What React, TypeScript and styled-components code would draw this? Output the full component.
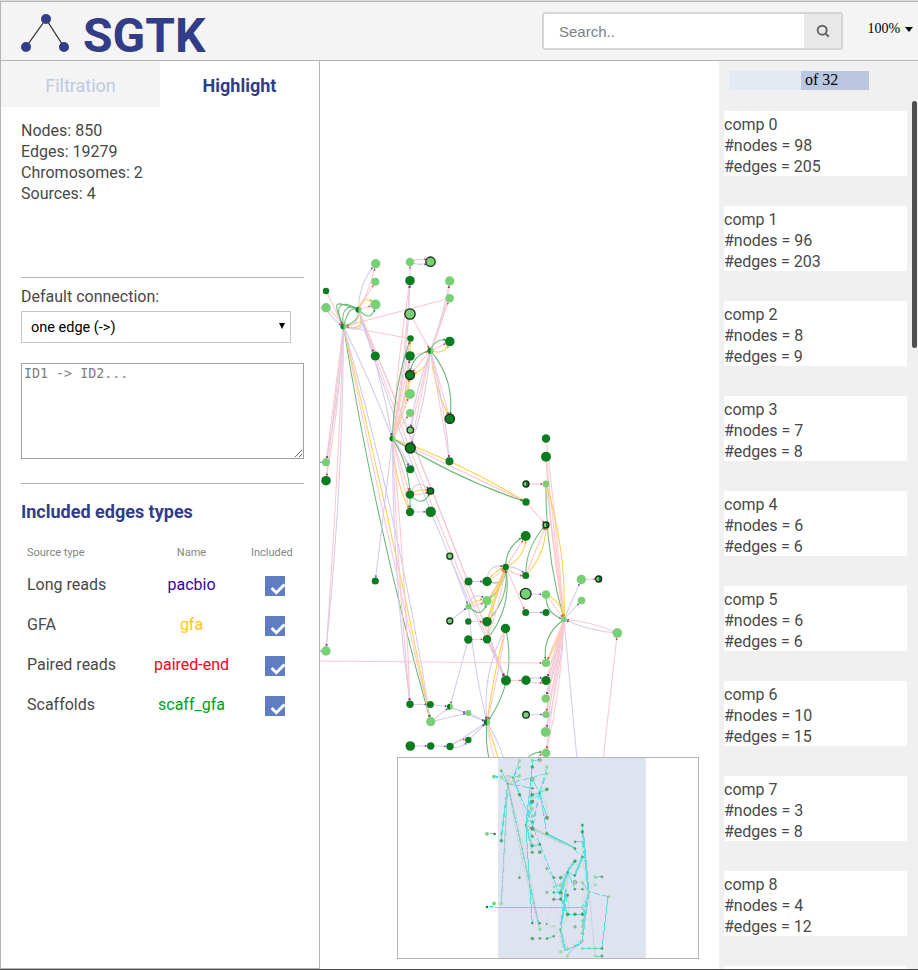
import React from "react";
import styled, { createGlobalStyle } from "styled-components";

const GlobalStyle = createGlobalStyle`
  * { box-sizing: border-box; }
  body { margin: 0; background: #fff; overflow: hidden; }
`;

const Page = styled.div`
  width: 918px;
  height: 970px;
  display: flex;
  flex-direction: column;
  border-top: 1px solid #dcdcdc;
  border-bottom: 1px solid #4a4a4a;
  background: #fff;
  color: #484848;
  font: 16px/21px Roboto, sans-serif;
  overflow: hidden;
`;

const Header = styled.header`
  height: 60px;
  flex: none;
  display: flex;
  border: 1px solid #b5b5b5;
  border-right: 0;
  background: #f4f4f4;
`;

const Logo = styled.div`
  display: flex;
  width: 542px;
  padding-left: 20px;
`;

const LogoMark = styled.svg`
  width: 50px;
  height: 42px;
  margin-top: 11px;
`;

const LogoText = styled.h1`
  margin: 6px 0 0 12px;
  font-size: 48px;
  line-height: 56px;
  font-weight: 700;
  color: #323c87;
`;

const SearchBox = styled.div`
  display: flex;
  width: 301px;
  height: 38px;
  margin-top: 10px;
  margin-left: -1px;
  border: 2px solid #d5d5d5;
  border-radius: 3px;
  background: #fff;
`;

const SearchInput = styled.input`
  flex: 1;
  min-width: 0;
  border: 0;
  padding: 0 15px;
  outline: 0;
  background: transparent;
  font: 15px "Liberation Sans", sans-serif;
  &::placeholder { color: #808080; opacity: 1; }
`;

const SearchButton = styled.button`
  width: 37px;
  border: 0;
  padding: 0;
  background: #e8e8e8;
  display: flex;
  align-items: center;
  justify-content: center;
`;

const Zoom = styled.div`
  display: flex;
  margin: 18px 0 0 24.5px;
  gap: 4.5px;
  color: #000;
  font: 14px/18px "Liberation Serif", serif;
`;

const Caret = styled.i`
  margin-top: 7px;
  height: 0;
  border: 4.5px solid transparent;
  border-top: 5px solid #000;
  border-bottom: 0;
`;

const Main = styled.main`
  flex: 1;
  min-height: 0;
  display: flex;
`;

const Sidebar = styled.aside`
  width: 320px;
  height: 908px;
  flex: none;
  border: 1px solid #b5b5b5;
  border-top: 0;
`;

const Tabs = styled.nav`
  display: flex;
  height: 46px;
`;

const Tab = styled.div<{ $active?: boolean }>`
  width: 159px;
  text-align: center;
  font-size: 18px;
  line-height: 50px;
  font-weight: ${(p) => (p.$active ? 700 : 400)};
  color: ${(p) => (p.$active ? "#323c87" : "#bccae3")};
  background: ${(p) => (p.$active ? "#fff" : "#f4f4f4")};
`;

const Stats = styled.div`
  height: 171px;
  margin: 0 15px 0 20px;
  padding-top: 13px;
  border-bottom: 1px solid #b5b5b5;
`;

const Connection = styled.section`
  height: 206px;
  margin: 0 15px 0 20px;
  padding-top: 8px;
  border-bottom: 1px solid #b5b5b5;
`;

const Select = styled.div`
  display: flex;
  justify-content: space-between;
  width: 270px;
  height: 32px;
  margin: 4px 0 20px;
  padding: 0 5px 0 9px;
  border: 1px solid #c4c4c4;
  color: #000;
  font-size: 14.5px;
  line-height: 31px;
`;

const SelectArrow = styled.i`
  width: 0;
  height: 6px;
  margin-top: 11px;
  border: 3.5px solid transparent;
  border-top: 6px solid #000;
  border-bottom: 0;
`;

const Commands = styled.textarea`
  display: block;
  width: 283px;
  height: 96px;
  margin: 0;
  padding: 2px;
  border: 1px solid #a3a3a3;
  outline: 0;
  font: 13.333px/16px "DejaVu Sans Mono", monospace;
  &::placeholder { color: #808080; opacity: 1; }
`;

const SectionTitle = styled.h2`
  margin: 17px 0 18px 20px;
  color: #323c87;
  font-size: 18px;
  line-height: 21px;
`;

const TypeRow = styled.div<{ $head?: boolean }>`
  display: grid;
  grid-template-columns: 105px 119px 40px;
  align-items: center;
  height: ${(p) => (p.$head ? "24px" : "40px")};
  margin-left: 26px;
  font-size: ${(p) => (p.$head ? "11px" : "16px")};
  color: ${(p) => (p.$head ? "#858585" : "#484848")};
`;

const Name = styled.span<{ $color?: string }>`
  text-align: center;
  color: ${(p) => p.$color || "inherit"};
`;

const HeadCell = styled.span`
  white-space: nowrap;
  text-align: center;
`;

const Check = styled.span`
  justify-self: center;
  width: 20px;
  height: 20px;
  margin: 4px 0 0 8px;
  background: #607cc3;
`;

const Canvas = styled.div`
  position: relative;
  width: 399px;
  flex: none;
`;

const Graph = styled.svg`
  display: block;
  width: 399px;
  height: 907px;
`;

const MiniMap = styled.svg`
  position: absolute;
  left: 77px;
  top: 696px;
  width: 302px;
  height: 202px;
  border: 1px solid #b5b5b5;
  background: #fff;
`;

const Components = styled.aside`
  display: flex;
  flex: 1;
  flex-direction: column;
  background: #f0f0f0;
  overflow: hidden;
`;

const Pager = styled.div`
  flex: none;
  display: flex;
  width: 140px;
  height: 19px;
  margin: 10px 0 0 10px;
  background: linear-gradient(to right, #e3eaf3 72px, #bbc7e0 72px);
  color: #000;
  font: 16px/18px "Liberation Serif", serif;
`;

const PagerText = styled.span`
  margin-left: 76px;
`;

const Scroller = styled.div`
  flex: 1;
  display: flex;
  justify-content: space-between;
  min-height: 0;
  margin-top: 11px;
`;

const Cards = styled.div`
  width: 188px;
  padding: 10px 0 0 5px;
  display: flex;
  flex-direction: column;
  gap: 30px;
  overflow: hidden;
`;

const Card = styled.div`
  flex: none;
  width: 183px;
  height: 65px;
  padding-top: 3px;
  background: #fff;
`;

const Thumb = styled.div`
  width: 5px;
  height: 247px;
  margin-right: 1px;
  border-radius: 3px;
  background: #505050;
`;

type Kind = "L" | "D" | "LO" | "DO" | "H" | "HO";
type Node = [number, number, number, Kind];

const nodes: Node[] = [
  [375.7, 263.7, 4.7, "L"], [375.3, 281.7, 4, "L"], [326, 291, 3.2, "D"], [326, 307.7, 4.7, "L"],
  [375.5, 304.5, 5, "L"], [358.5, 309.7, 3, "H"], [343.5, 326.5, 3, "H"], [375.3, 356, 4.6, "D"],
  [410, 262, 4.3, "L"], [430.5, 261.7, 4.7, "LO"], [410, 280.7, 4.8, "D"], [449.7, 281, 4.7, "L"],
  [449.7, 298.3, 4.2, "L"], [410, 314, 5.2, "LO"], [410.5, 338.5, 3.3, "D"], [410, 356, 4.8, "D"],
  [449.8, 341.5, 4.8, "D"], [430.5, 350.7, 3.1, "H"], [410, 375, 4.5, "DO"], [410, 394, 5, "L"],
  [410, 413, 4, "L"], [410.3, 430, 3.2, "LO"], [410.3, 448, 5, "DO"], [449.8, 418.7, 4.7, "DO"],
  [449.5, 461.3, 4, "D"], [326, 462.3, 4, "L"], [326, 480.7, 4.8, "D"], [392.5, 438.5, 2.9, "H"],
  [410.3, 469.3, 4, "D"], [410, 494.5, 4.2, "D"], [430.5, 491, 3.2, "DO"], [410, 512, 4.2, "D"],
  [430.7, 511.8, 5.2, "D"], [546, 438.5, 4.2, "D"], [546, 456.7, 5, "D"], [526, 484, 3, "HO"],
  [546, 484, 3.4, "L"], [526, 502, 3.7, "D"], [546, 525, 3, "HO"], [525.7, 536, 5, "D"],
  [505.7, 567, 3.2, "D"], [449.8, 556.2, 3, "LO"], [468.5, 581.5, 4, "D"], [487, 581.5, 4.7, "D"],
  [525.7, 575.5, 3.5, "D"], [525.7, 593.7, 5.4, "LO"], [546, 594.5, 4.3, "L"], [581.3, 579.5, 4.7, "L"],
  [598.7, 579, 3, "HO"], [581.5, 600.5, 3.8, "L"], [564, 619.5, 2.8, "L"], [487, 600.7, 4.7, "L"],
  [468.5, 606.5, 3, "L"], [449.8, 621, 3, "LO"], [468.3, 621.5, 3.2, "D"], [487, 621.7, 4.8, "D"],
  [468.3, 639.5, 4.2, "D"], [487, 639.3, 4.2, "D"], [525.7, 612.5, 3.5, "D"], [546, 612.5, 3.5, "D"],
  [505.5, 628.5, 4.7, "D"], [617.3, 633, 4.8, "L"], [546, 663, 4.1, "L"], [506, 680.5, 5, "D"],
  [526, 680.3, 4.7, "D"], [546, 680.5, 4.6, "D"], [545.7, 698.5, 4.2, "L"], [526, 714.8, 3.3, "LO"],
  [546, 714.5, 3.6, "L"], [545.7, 732, 5, "L"], [546, 753, 4.4, "L"], [410, 704.3, 3.7, "D"],
  [430.3, 704.5, 3.5, "D"], [450, 706.7, 3, "H"], [468.3, 713, 3, "L"], [430.7, 721.7, 4.6, "L"],
  [487, 722.3, 3.3, "H"], [410.3, 746, 4.8, "D"], [430.7, 746, 3.7, "D"], [450, 746.5, 3.7, "D"],
  [468.3, 740, 3.2, "D"], [326, 651, 4.7, "L"], [375.3, 581, 3.6, "D"],
];

type Ink = "p" | "l" | "g" | "y";
/* ink, x1, y1, x2, y2, bend of the curve's control point */
type Edge = [Ink, number, number, number, number, number?];

const ink: Record<Ink, string> = { p: "#ffc6cc", l: "#d2cbef", g: "#67b976", y: "#fdcf4b" };

const edges: Edge[] = [
  ["l", 326, 307.7, 343.5, 326.5, 4], ["p", 326, 291, 343.5, 326.5], ["p", 326, 307.7, 343.5, 326.5, -3],
  ["p", 449.7, 298.3, 343.5, 326.5], ["p", 410.5, 338.5, 343.5, 326.5],
  ["p", 343.5, 326.5, 326, 462.3], ["p", 343.5, 326.5, 326, 480.7], ["p", 343.5, 326.5, 326, 480.7, -5],
  ["l", 343.5, 326.5, 326, 462.3, -5], ["p", 343.5, 326.5, 326, 651, -3], ["l", 343.5, 326.5, 326, 651, -8],
  ["g", 343.5, 326.5, 430.7, 721.7, 12], ["p", 343.5, 326.5, 430.7, 721.7, 3],
  ["y", 343.5, 326.5, 430.7, 721.7, -4], ["l", 343.5, 326.5, 430.7, 721.7, -13],
  ["l", 343.5, 326.5, 392.5, 438.5, -3],
  ["p", 358.5, 309.7, 375.3, 356], ["l", 358.5, 309.7, 375.3, 356, 3], ["l", 358.5, 309.7, 392.5, 438.5, -6],
  ["l", 358.5, 309.7, 506, 680.5, -3], ["p", 358.5, 309.7, 506, 680.5, 8], ["p", 358.5, 309.7, 506, 680.5, -3], ["l", 358.5, 309.7, 506, 680.5, 15],
  ["l", 358.5, 309.7, 375.7, 263.7, -9], ["p", 358.5, 309.7, 375.7, 263.7, 4], ["p", 358.5, 309.7, 375.3, 281.7],
  ["y", 358.5, 309.7, 375.5, 304.5, -15], ["p", 358.5, 309.7, 375.5, 304.5], ["g", 358.5, 309.7, 375.5, 304.5, 18],
  ["l", 410, 262, 430.5, 261.7, 5], ["p", 410, 262, 430.5, 261.7, -5], ["p", 410, 280.7, 410, 262],
  ["p", 392.5, 438.5, 410, 280.7, -4], ["p", 392.5, 438.5, 410, 280.7, 4], ["l", 392.5, 438.5, 410, 280.7, 7],
  ["g", 392.5, 438.5, 410.5, 338.5, -8], ["p", 392.5, 438.5, 410.5, 338.5], ["y", 392.5, 438.5, 410.5, 338.5, 8],
  ["p", 392.5, 438.5, 410, 356], ["l", 392.5, 438.5, 410, 356, 6], ["p", 392.5, 438.5, 410, 375, 3],
  ["y", 392.5, 438.5, 410, 375, 7], ["p", 392.5, 438.5, 410, 394], ["p", 392.5, 438.5, 410, 413],
  ["p", 410, 314, 430.5, 350.7], ["l", 430.5, 350.7, 449.7, 281, 3], ["p", 430.5, 350.7, 449.7, 281, 6], ["p", 430.5, 350.7, 449.7, 298.3],
  ["g", 430.5, 350.7, 449.8, 341.5, -11], ["p", 430.5, 350.7, 449.8, 341.5], ["y", 430.5, 350.7, 449.8, 341.5, 11],
  ["p", 410, 356, 430.5, 350.7], ["g", 430.5, 350.7, 410, 375, 12], ["p", 430.5, 350.7, 410, 375], ["y", 430.5, 350.7, 410, 375, -11],
  ["g", 430.5, 350.7, 449.8, 418.7, -16], ["p", 430.5, 350.7, 449.8, 418.7], ["y", 430.5, 350.7, 449.8, 418.7, 7],
  ["p", 430.5, 350.7, 410.3, 430], ["p", 430.5, 350.7, 410.3, 448], ["l", 430.5, 350.7, 410.3, 448, -6], ["l", 430.5, 350.7, 410.3, 430, 5],
  ["p", 430.5, 350.7, 449.5, 461.3], ["l", 430.5, 350.7, 449.5, 461.3, -5],
  ["y", 392.5, 438.5, 526, 502, -8], ["p", 392.5, 438.5, 526, 502], ["g", 392.5, 438.5, 526, 502, 9],
  ["p", 392.5, 438.5, 410.3, 469.3], ["l", 392.5, 438.5, 410.3, 469.3, -3], ["g", 392.5, 438.5, 410, 494.5, -8],
  ["p", 392.5, 438.5, 410, 494.5], ["p", 392.5, 438.5, 410, 512], ["y", 392.5, 438.5, 410, 512, 8],
  ["l", 392.5, 438.5, 375.3, 581], ["p", 392.5, 438.5, 410, 704.3, 4], ["p", 392.5, 438.5, 410, 704.3, -4], ["l", 392.5, 438.5, 410, 704.3, 9],
  ["g", 410, 494.5, 410, 512], ["l", 410, 512, 430.7, 511.8], ["y", 410, 494.5, 430.5, 491, -5], ["p", 410, 494.5, 430.5, 491, 3], ["g", 410, 494.5, 430.5, 491, 17], ["l", 410, 494.5, 430.5, 491, -17],
  ["p", 546, 438.5, 564, 619.5, -2], ["p", 546, 456.7, 564, 619.5], ["p", 546, 456.7, 564, 619.5, 5],
  ["g", 546, 484, 564, 619.5, 10], ["p", 546, 484, 564, 619.5], ["y", 546, 484, 564, 619.5, -12],
  ["p", 526, 484, 546, 484], ["p", 526, 502, 546, 525],
  ["g", 525.7, 575.5, 546, 525, -11], ["p", 525.7, 575.5, 546, 525], ["y", 525.7, 575.5, 546, 525, 11],
  ["g", 505.7, 567, 525.7, 536, -12], ["p", 505.7, 567, 525.7, 536], ["y", 505.7, 567, 525.7, 536, 12],
  ["l", 505.7, 567, 525.7, 575.5, -6], ["p", 505.7, 567, 525.7, 575.5, 5],
  ["l", 487, 581.5, 505.7, 567, -15], ["y", 487, 581.5, 505.7, 567, -4], ["p", 487, 581.5, 505.7, 567, 2], ["g", 487, 581.5, 505.7, 567, 17],
  ["p", 487, 600.7, 505.7, 567, 2], ["y", 487, 600.7, 505.7, 567, 4], ["g", 487, 600.7, 505.7, 567, 9],
  ["p", 487, 621.7, 505.7, 567, 2], ["y", 487, 621.7, 505.7, 567, -2], ["g", 487, 621.7, 505.7, 567, 14],
  ["p", 487, 639.3, 505.7, 567, 4], ["y", 487, 639.3, 505.7, 567, -4], ["g", 487, 639.3, 505.7, 567, 17],
  ["p", 505.7, 567, 525.7, 612.5], ["l", 468.5, 581.5, 487, 581.5], ["l", 525.7, 593.7, 546, 594.5],
  ["l", 468.5, 606.5, 487, 600.7, -16], ["y", 468.5, 606.5, 487, 600.7, -6], ["p", 468.5, 606.5, 487, 600.7, 2], ["g", 468.5, 606.5, 487, 600.7, 18],
  ["l", 449.8, 556.2, 468.5, 606.5], ["l", 449.8, 621, 468.5, 606.5], ["p", 468.3, 621.5, 487, 621.7], ["p", 468.3, 639.5, 487, 639.3],
  ["l", 468.5, 606.5, 487, 722.3, 5], ["l", 468.3, 639.5, 450, 706.7], ["p", 487, 639.3, 506, 680.5], ["l", 487, 621.7, 506, 680.5, 5],
  ["l", 525.7, 612.5, 546, 612.5], ["l", 505.5, 628.5, 487, 722.3, 15], ["y", 505.5, 628.5, 487, 722.3, 3], ["p", 505.5, 628.5, 487, 722.3, -2], ["g", 505.5, 628.5, 487, 722.3, -22],
  ["g", 546, 594.5, 564, 619.5, 12], ["p", 546, 594.5, 564, 619.5], ["y", 546, 594.5, 564, 619.5, -9],
  ["l", 564, 619.5, 581.3, 579.5], ["l", 564, 619.5, 581.5, 600.5], ["p", 581.3, 579.5, 598.7, 579],
  ["p", 617.3, 633, 564, 619.5, 5], ["l", 617.3, 633, 564, 619.5, -5], ["p", 602, 770, 617.3, 633], ["l", 564, 619.5, 578, 770],
  ["g", 564, 619.5, 546, 663, 15], ["y", 564, 619.5, 546, 663, -3], ["p", 564, 619.5, 546, 663],
  ["p", 564, 619.5, 546, 680.5], ["l", 564, 619.5, 546, 680.5, -5], ["p", 564, 619.5, 545.7, 698.5, 2], ["l", 564, 619.5, 545.7, 698.5, -4],
  ["p", 564, 619.5, 546, 714.5, 3], ["p", 564, 619.5, 546, 714.5, -3], ["p", 564, 619.5, 545.7, 732], ["l", 564, 619.5, 545.7, 732, -6],
  ["p", 564, 619.5, 546, 753], ["p", 564, 619.5, 546, 753, -7], ["p", 310, 661, 546, 663],
  ["p", 506, 680.5, 526, 680.3], ["p", 526, 680.3, 546, 680.5, 5], ["l", 526, 680.3, 546, 680.5, -5], ["l", 526, 714.8, 546, 714.5],
  ["l", 410, 704.3, 430.3, 704.5], ["l", 430.3, 704.5, 450, 706.7], ["l", 450, 706.7, 468.3, 713, 1], ["l", 430.7, 721.7, 450, 706.7],
  ["l", 430.7, 721.7, 468.3, 713], ["l", 468.3, 713, 487, 722.3], ["l", 450, 706.7, 487, 722.3], ["l", 410.3, 746, 430.7, 746],
  ["l", 430.7, 746, 450, 746.5], ["p", 450, 746.5, 468.3, 740, -5], ["l", 450, 746.5, 468.3, 740, 7], ["l", 468.3, 740, 487, 722.3],
  ["l", 450, 746.5, 487, 722.3], ["g", 487, 722.3, 492, 770, 5], ["y", 487, 722.3, 502, 770], ["p", 487, 722.3, 498, 770, 3], ["l", 487, 722.3, 507, 770, -4],
  ["g", 524, 765, 546, 753, -11], ["p", 528, 768, 546, 753, -5],
];

const loops: [Ink, string][] = [
  ["g", "M343.5 326.5C328 293 341 305 358.5 309.7"],
  ["g", "M343.5 326.5C330 299 348 302 358.5 309.7"],
  ["g", "M343.5 326.5C340 308 350 303 358.5 309.7"],
  ["g", "M343.5 326.5C348 309 352 307 358.5 309.7"],
  ["g", "M343.5 326.5C352 323 359 321 358.5 309.7"],
  ["y", "M343.5 326.5C361 331 364 324 358.5 309.7"],
  ["p", "M343.5 326.5C356 327 360 318 358.5 309.7"],
  ["l", "M343.5 326.5C364 334 365 325 358.5 309.7"],
];

function curve([, x1, y1, x2, y2, bend = 0]: Edge) {
  const length = Math.hypot(x2 - x1, y2 - y1) || 1;
  const cx = (x1 + x2) / 2 - ((y2 - y1) / length) * bend;
  const cy = (y1 + y2) / 2 + ((x2 - x1) / length) * bend;
  return { d: `M${x1} ${y1}Q${cx} ${cy} ${x2} ${y2}`, cx, cy };
}

function Arrow({ edge }: { edge: Edge }) {
  const [kind, , , x2, y2] = edge;
  const { cx, cy } = curve(edge);
  const target = nodes.find((n) => n[0] === x2 && n[1] === y2);
  const distance = (target ? target[2] : 3) + 1.4;
  const length = Math.hypot(cx - x2, cy - y2) || 1;
  const fill = { p: "#f0304c", l: "#5b3fb5", g: "#16953b", y: "#f09a00" }[kind];
  return <circle cx={x2 + ((cx - x2) / length) * distance} cy={y2 + ((cy - y2) / length) * distance} r={0.9} fill={fill} />;
}

const LIGHT = "#77d075";
const DARK = "#0b7d20";

function NodeDot({ node: [x, y, r, kind] }: { node: Node }) {
  const half = kind[0] === "H";
  const outlined = kind.endsWith("O");
  return (
    <g>
      <circle cx={x} cy={y} r={r} fill={kind[0] === "D" ? DARK : LIGHT} />
      {half && <path d={`M${x} ${y - r}A${r} ${r} 0 0 ${outlined ? 1 : 0} ${x} ${y + r}Z`} fill={DARK} />}
      {outlined && <circle cx={x} cy={y} r={r} fill="none" stroke="#17301b" strokeWidth={1.3} />}
    </g>
  );
}

const outerMini: Node[] = [
  [494, 776.7, 1.9, "L"], [487, 833.8, 1.9, "L"], [494.5, 834, 1.2, "D"], [494, 903.5, 1.9, "L"], [487, 907, 1.2, "D"],
];
const lowerMini: Node[] = [
  [560.7, 952, 1.8, "L"], [567.5, 949, 1.7, "L"], [567.5, 956, 1.6, "L"], [575, 946, 1.3, "L"],
  [582.3, 948.5, 1.5, "L"], [589, 948.5, 1.2, "L"], [595.3, 948.5, 1.5, "L"], [602, 948.5, 1.4, "D"],
  [595.3, 956, 1.4, "L"], [602, 956, 1.4, "D"],
];

function Overview() {
  const cyan = edges.filter((e) => e[0] === "p" && e[4] < 765 && e[2] < 765);
  return (
    <MiniMap viewBox="398 758 300 200">
      <path d="M496 777H500M490 833.5H493M489 906.5H493" stroke="#00efff" strokeWidth={1.5} shapeRendering="crispEdges" />
      {outerMini.map((n, i) => <NodeDot key={i} node={n} />)}
      <rect x={498} y={758} width={148} height={200} fill="#dde3ef" />
      <g transform="translate(501.3 760.7) scale(.3685) translate(-326 -263.7)">
        <g fill="none" strokeWidth={1.6} opacity={0.35}>
          {edges.filter((e) => e[0] !== "p").map((e, i) => <path key={i} d={curve(e).d} stroke={e[0] === "l" ? "#c9c0dc" : ink[e[0]]} />)}
        </g>
        <g fill="none" stroke="#55dfe3" strokeWidth={2.6} shapeRendering="crispEdges">
          {cyan.map((e, i) => (
            <path key={i} d={`M${e[1]} ${e[2]}L${e[3]} ${e[4]}`} strokeDasharray={i % 3 ? "18 7" : "30 5"} />
          ))}
          <path d="M347 345L426 700" strokeWidth={3.5} strokeDasharray="45 5" />
          <path d="M449 463L526 500M505 565L526 536M526 574L545 528M505 570L487 618M549 470L562 615" strokeWidth={5} />
        </g>
        <g fill="none" strokeWidth={1.8} stroke="#b7c5b9">
          {loops.map(([, d], i) => <path key={i} d={d} />)}
          <path d="M343.5 326.5L430.7 721.7M392.5 438.5L526 502M343.5 326.5L326 651M505.7 567L487 640M564 619.5L546 732" />
        </g>
        <g opacity={0.58}>
          {nodes.map((n, i) => <NodeDot key={i} node={n} />)}
        </g>
      </g>
      <path d="M498 907.3H582M567 950L575 946L582 941M568 954L575 947L582 943M583 948.5H602M596 956H602M602 948L608 897" fill="none" stroke="#55dfe3" shapeRendering="crispEdges" />
      <path d="M561 931L565 951M566 889L561 925" fill="none" stroke="#55dfe3" strokeWidth={1.8} shapeRendering="crispEdges" />
      <path d="M561 930L567 950M589 892L595 956" fill="none" stroke="#c3c9d0" strokeWidth={0.5} />
      <g opacity={0.58}>{lowerMini.map((n, i) => <NodeDot key={i} node={n} />)}</g>
    </MiniMap>
  );
}

const sources = [
  ["Long reads", "pacbio", "#3d00a5"],
  ["GFA", "gfa", "#ffc61a"],
  ["Paired reads", "paired-end", "#f90021"],
  ["Scaffolds", "scaff_gfa", "#009e1e"],
];

const components = [[98, 205], [96, 203], [8, 9], [7, 8], [6, 6], [6, 6], [10, 15], [3, 8], [4, 12]];

export default function App() {
  return (
    <Page>
      <GlobalStyle />
      <Header>
        <Logo>
          <LogoMark viewBox="21 13 50 42">
            <path d="M26 47L46 19L64 47" fill="none" stroke="#222" strokeWidth={1.2} />
            <g fill="#323c87"><circle cx={46} cy={19} r={5} /><circle cx={26} cy={47} r={5} /><circle cx={64} cy={47} r={5} /></g>
          </LogoMark>
          <LogoText>SGTK</LogoText>
        </Logo>
        <SearchBox>
          <SearchInput placeholder="Search.." />
          <SearchButton aria-label="Search">
            <svg width="14" height="14" viewBox="0 0 14 14" fill="none" stroke="#666" strokeWidth={2}>
              <circle cx="6.2" cy="6.2" r="4.5" /><path d="M9.3 9.3L12.8 12.8" />
            </svg>
          </SearchButton>
        </SearchBox>
        <Zoom>100%<Caret /></Zoom>
      </Header>
      <Main>
        <Sidebar>
          <Tabs><Tab>Filtration</Tab><Tab $active>Highlight</Tab></Tabs>
          <Stats>
            <div>Nodes: 850</div>
            <div>Edges: 19279</div>
            <div>Chromosomes: 2</div>
            <div>Sources: 4</div>
          </Stats>
          <Connection>
            <div>Default connection:</div>
            <Select>one edge (-&gt;)<SelectArrow /></Select>
            <Commands placeholder="ID1 -> ID2..." />
          </Connection>
          <SectionTitle>Included edges types</SectionTitle>
          <TypeRow $head><span>Source type</span><Name>Name</Name><HeadCell>Included</HeadCell></TypeRow>
          {sources.map(([type, name, color]) => (
            <TypeRow key={name}>
              <span>{type}</span>
              <Name $color={color}>{name}</Name>
              <Check>
                <svg width="20" height="20" viewBox="0 0 20 20" fill="none" stroke="#fff" strokeWidth={3}>
                  <path d="M6.6 12L11.3 16.7L19.5 8.5" />
                </svg>
              </Check>
            </TypeRow>
          ))}
        </Sidebar>
        <Canvas>
          <Graph viewBox="320 61 399 907">
            <g fill="none" strokeWidth={1.05}>
              {edges.map((e, i) => <path key={i} d={curve(e).d} stroke={ink[e[0]]} />)}
              {loops.map(([c, d], i) => <path key={i} d={d} stroke={ink[c]} />)}
              <path d="M319 462.3H326" stroke="#8c7cd0" />
              <path d="M319 651H326" stroke="#8c7cd0" />
              <path d="M319 307.7H326" stroke={ink.p} />
            </g>
            {edges.map((e, i) => <Arrow key={i} edge={e} />)}
            {nodes.map((n, i) => <NodeDot key={i} node={n} />)}
          </Graph>
          <Overview />
        </Canvas>
        <Components>
          <Pager><PagerText>of 32</PagerText></Pager>
          <Scroller>
            <Cards>
              {components.map(([n, e], i) => (
                <Card key={i}>
                  <div>comp {i}</div>
                  <div>#nodes = {n}</div>
                  <div>#edges = {e}</div>
                </Card>
              ))}
              <Card />
            </Cards>
            <Thumb />
          </Scroller>
        </Components>
      </Main>
    </Page>
  );
}
